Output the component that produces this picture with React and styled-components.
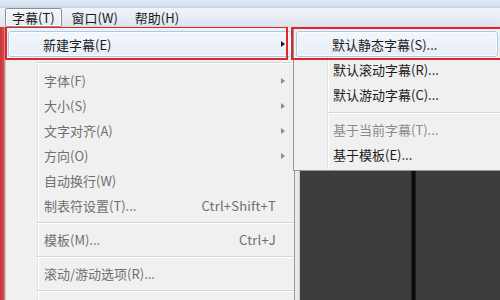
import React from "react";
import styled, { createGlobalStyle } from "styled-components";

const Global = createGlobalStyle`
  html, body { margin: 0; padding: 0; background: #f0f0f0; }
  body { font-family: "Noto Sans CJK SC", "Noto Sans", sans-serif; }
`;

const Screen = styled.div`
  width: 500px;
  height: 300px;
  overflow: hidden;
  display: grid;
  grid-template-rows: 8px 19px 1fr;
  font-size: 13px;
  color: #1b1b1b;
`;

const TitleStrip = styled.div`
  background: linear-gradient(to bottom, #e2eaf5 0%, #d3e0f0 70%, #c3d3e8 100%);
`;

const MenuBar = styled.div`
  display: flex;
  align-items: stretch;
  gap: 3px;
  padding-left: 5px;
  background: linear-gradient(to bottom, #f0f4fa 0%, #e8edf5 50%, #dde4ee 100%);
  border-bottom: 1px solid #d4dbe5;
  position: relative;
  z-index: 3;
`;

const TopItem = styled.div`
  display: flex;
  align-items: center;
  padding: 0 6px;
  line-height: 1;
  white-space: nowrap;
  border: 1px solid ${(p) => (p.$active ? "#8b8f95" : "transparent")};
  border-radius: 2px;
  margin-bottom: -1px;
  background: ${(p) =>
    p.$active ? "linear-gradient(to bottom, #f6f8fb, #e6eaf0)" : "transparent"};
  box-shadow: ${(p) => (p.$active ? "inset 0 0 0 1px #ffffff" : "none")};
`;

const Body = styled.div`
  display: flex;
  min-height: 0;
`;

const RedEdge = styled.div`
  width: 5px;
  background: linear-gradient(to right, #c7363a 0%, #d0484a 70%, #e2a0a0 100%);
`;

const MainMenu = styled.div`
  position: relative;
  width: 290px;
  flex: none;
  box-sizing: border-box;
  border-right: 1px solid #979797;
  border-left: 1px solid #c9c9c9;
  padding-top: 4px;
  background:
    linear-gradient(to right, transparent 31px, #e2e3e3 31px, #e2e3e3 32px, #ffffff 32px, #ffffff 33px, transparent 33px),
    #f0f0f0;
  z-index: 1;
`;

const Item = styled.div`
  display: grid;
  grid-template-columns: 1fr auto ${(p) => p.$arrowCol}px;
  align-items: center;
  height: ${(p) => p.$h || 25}px;
  box-sizing: border-box;
  margin: 0 2px;
  padding-left: ${(p) => p.$indent}px;
  white-space: nowrap;
  border: 1px solid ${(p) => (p.$hot ? "#aac8ea" : "transparent")};
  border-radius: 3px;
  background: ${(p) =>
    p.$hot ? "linear-gradient(to bottom, #f3f7fc 0%, #e6eef8 100%)" : "transparent"};
  box-shadow: ${(p) => (p.$hot ? "inset 0 0 0 1px rgba(255,255,255,0.7)" : "none")};
`;

const Label = styled.span`
  color: ${(p) => (p.$tone === "dim" ? "#6f6f6f" : p.$tone === "off" ? "#8a8a8a" : "#1b1b1b")};
`;

const Shortcut = styled.span`
  color: #6f6f6f;
  letter-spacing: 0.2px;
`;

const ArrowCell = styled.span`
  display: flex;
  align-items: center;
  padding-left: 5px;
`;

const Arrow = styled.span`
  width: 0;
  height: 0;
  border-top: 3.5px solid transparent;
  border-bottom: 3.5px solid transparent;
  border-left: 4px solid ${(p) => (p.$dim ? "#8c8c8c" : "#1b1b1b")};
`;

const Separator = styled.div`
  height: ${(p) => p.$h}px;
  display: flex;
  align-items: center;
  padding-left: ${(p) => p.$indent}px;
  &::after {
    content: "";
    flex: 1;
    height: 1px;
    background: #d7d7d7;
    box-shadow: 0 1px 0 #ffffff;
  }
`;

const Annotation = styled.div`
  position: absolute;
  left: ${(p) => p.$x}px;
  top: ${(p) => p.$y}px;
  width: ${(p) => p.$w}px;
  height: ${(p) => p.$hgt}px;
  border: 2px solid #e0262b;
  box-sizing: border-box;
  pointer-events: none;
  z-index: 5;
`;

const RightColumn = styled.div`
  flex: 1;
  display: flex;
  flex-direction: column;
  min-width: 0;
`;

const SubMenu = styled.div`
  position: relative;
  margin-left: -2px;
  height: 144px;
  flex: none;
  box-sizing: border-box;
  border-left: 1px solid #979797;
  border-bottom: 1px solid #979797;
  padding-top: 4px;
  background:
    linear-gradient(to right, transparent 33px, #e2e3e3 33px, #e2e3e3 34px, #ffffff 34px, #ffffff 35px, transparent 35px),
    #f0f0f0;
  z-index: 2;
`;

const Workspace = styled.div`
  flex: 1;
  display: flex;
  background: #3d3d3d;
`;

const Gutter = styled.div`
  width: 4px;
  background: #e9e9e9;
  border-right: 1px solid #c9c9c9;
`;

const Pane = styled.div`
  width: ${(p) => (p.$w ? `${p.$w}px` : "auto")};
  flex: ${(p) => (p.$w ? "none" : "1")};
  background: #3d3d3d;
`;

const Divider = styled.div`
  width: 5px;
  background: linear-gradient(to right, #2a2a2a, #0c0c0c 30%, #0c0c0c 70%, #2a2a2a);
`;

const mainItems = [
  { type: "sep", h: 11 },
  { label: "字体(F)", arrow: true },
  { label: "大小(S)", arrow: true },
  { label: "文字对齐(A)", arrow: true },
  { label: "方向(O)", arrow: true },
  { label: "自动换行(W)" },
  { label: "制表符设置(T)...", shortcut: "Ctrl+Shift+T" },
  { type: "sep", h: 9 },
  { label: "模板(M)...", shortcut: "Ctrl+J" },
  { type: "sep", h: 9 },
  { label: "滚动/游动选项(R)..." },
  { type: "sep", h: 9 },
];

const subItems = [
  { label: "默认滚动字幕(R)..." },
  { label: "默认游动字幕(C)..." },
  { type: "sep", h: 10 },
  { label: "基于当前字幕(T)...", tone: "off" },
  { label: "基于模板(E)..." },
];

export default function App() {
  return (
    <>
      <Global />
      <Screen>
        <TitleStrip />
        <MenuBar>
          <TopItem $active>字幕(T)</TopItem>
          <TopItem>窗口(W)</TopItem>
          <TopItem>帮助(H)</TopItem>
        </MenuBar>
        <Body>
          <RedEdge />
          <MainMenu>
            <Item $hot $indent={34} $arrowCol={15} $h={26}>
              <Label>新建字幕(E)</Label>
              <span />
              <ArrowCell>
                <Arrow />
              </ArrowCell>
            </Item>
            {mainItems.map((it, i) =>
              it.type === "sep" ? (
                <Separator key={i} $h={it.h} $indent={30} />
              ) : (
                <Item key={i} $indent={35} $arrowCol={15}>
                  <Label $tone="dim">{it.label}</Label>
                  <Shortcut>{it.shortcut || ""}</Shortcut>
                  <ArrowCell>{it.arrow ? <Arrow $dim /> : null}</ArrowCell>
                </Item>
              )
            )}
            <Annotation $x={-1} $y={-1} $w={283} $hgt={34} />
          </MainMenu>
          <RightColumn>
            <SubMenu>
              <Item $hot $indent={35} $arrowCol={0} $h={26}>
                <Label>默认静态字幕(S)...</Label>
                <span />
                <span />
              </Item>
              {subItems.map((it, i) =>
                it.type === "sep" ? (
                  <Separator key={i} $h={it.h} $indent={34} />
                ) : (
                  <Item key={i} $indent={36} $arrowCol={0}>
                    <Label $tone={it.tone}>{it.label}</Label>
                    <span />
                    <span />
                  </Item>
                )
              )}
              <Annotation $x={-3} $y={0} $w={220} $hgt={33} />
            </SubMenu>
            <Workspace>
              <Gutter />
              <Pane $w={111} />
              <Divider />
              <Pane />
            </Workspace>
          </RightColumn>
        </Body>
      </Screen>
    </>
  );
}
